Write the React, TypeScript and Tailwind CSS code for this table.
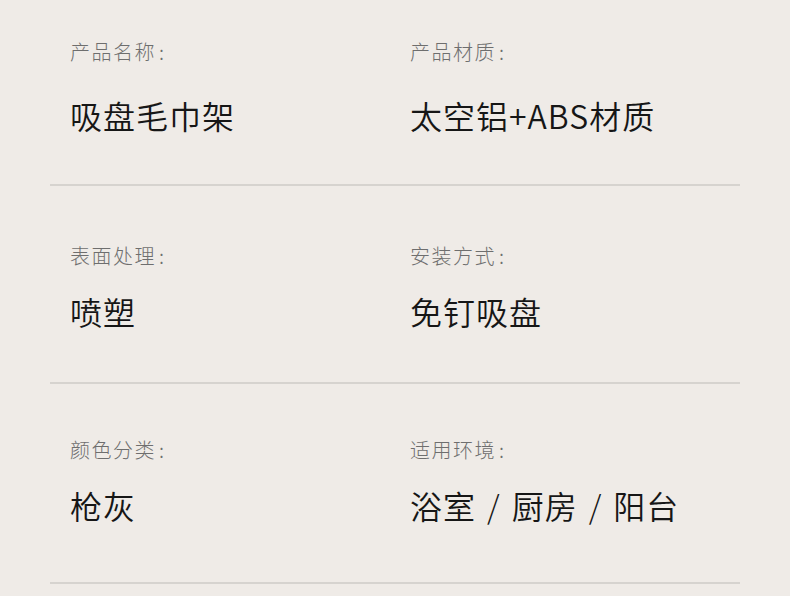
const rows = [
  {
    pad: 'pt-[42px] pb-[52px]',
    gap: 'gap-[37px]',
    items: [
      { label: '产品名称', value: ['吸盘毛巾架'] },
      { label: '产品材质', value: ['太空铝+ABS材质'] },
    ],
  },
  {
    pad: 'pt-[60px] pb-[54px]',
    gap: 'gap-[29px]',
    items: [
      { label: '表面处理', value: ['喷塑'] },
      { label: '安装方式', value: ['免钉吸盘'] },
    ],
  },
  {
    pad: 'pt-[56px] pb-[60px]',
    gap: 'gap-[29px]',
    items: [
      { label: '颜色分类', value: ['枪灰'] },
      { label: '适用环境', value: ['浴室', '厨房', '阳台'] },
    ],
  },
]

export default function App() {
  return (
    <div
      className="h-[596px] w-[790px] overflow-hidden bg-[#efebe7] px-[50px]"
      style={{ fontFamily: '"Noto Sans CJK SC", "Noto Sans", sans-serif' }}
    >
      {rows.map((row, i) => (
        <div key={i} className={`border-b-2 border-[#d6d3cf] ${row.pad}`}>
          <div className="grid grid-cols-[340px_1fr] pl-[20px]">
            {row.items.map((item) => (
              <div key={item.label} className={`flex flex-col ${row.gap}`}>
                <p className="text-[20px] leading-[20px] font-light tracking-[1.5px] text-[#6e6e6e]">
                  {item.label}
                  <span className="ml-[3px]">:</span>
                </p>
                <p className="flex items-center text-[32px] leading-[33px] font-[350] tracking-[1px] text-[#161616]">
                  {item.value.map((part, j) => (
                    <span key={part} className="flex items-center">
                      {j > 0 && <span className="mx-[11px] font-light">/</span>}
                      {part}
                    </span>
                  ))}
                </p>
              </div>
            ))}
          </div>
        </div>
      ))}
    </div>
  )
}
